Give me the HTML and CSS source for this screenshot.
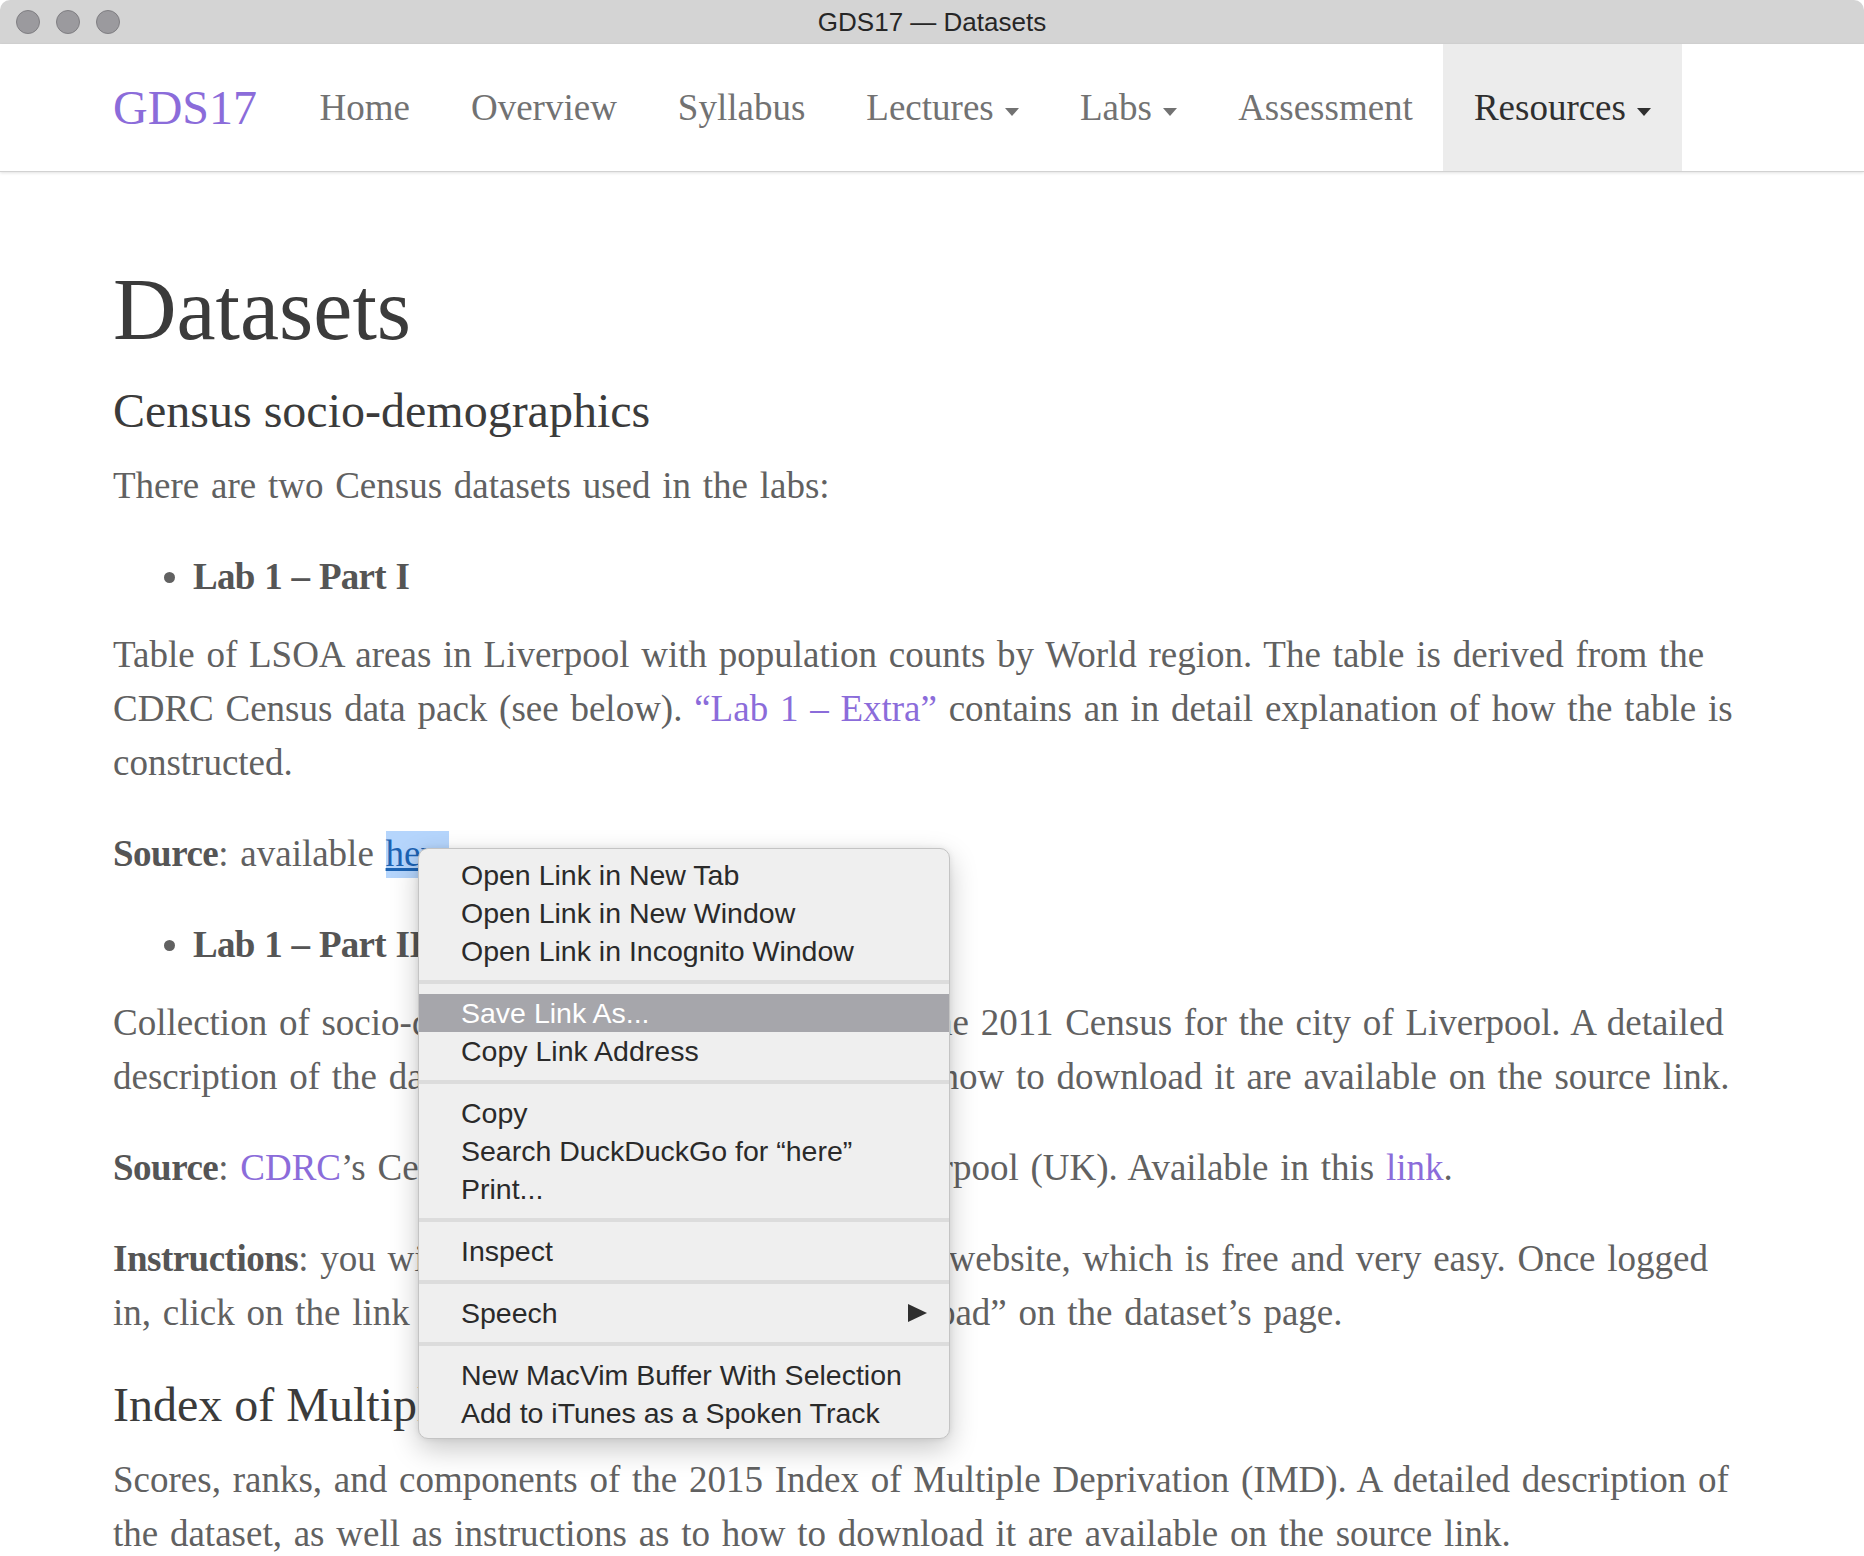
FILE: index.html
```html
<!DOCTYPE html>
<html lang="en">
<head>
<meta charset="utf-8">
<title>GDS17 — Datasets</title>
<link rel="stylesheet" href="styles.css">
</head>
<body>
<div class="window">
  <header class="titlebar">
    <div class="lights">
      <span class="light"></span><span class="light"></span><span class="light"></span>
    </div>
    <div class="title">GDS17 — Datasets</div>
    <div class="spacer"></div>
  </header>

  <nav class="navbar">
    <a class="brand" href="#">GDS17</a>
    <ul class="nav">
      <li><a href="#">Home</a></li>
      <li><a href="#">Overview</a></li>
      <li><a href="#">Syllabus</a></li>
      <li><a href="#">Lectures <span class="caret"></span></a></li>
      <li><a href="#">Labs <span class="caret"></span></a></li>
      <li><a href="#">Assessment</a></li>
      <li class="active"><a href="#">Resources <span class="caret"></span></a></li>
    </ul>
  </nav>

  <main class="content">
    <h1>Datasets</h1>
    <h2>Census socio-demographics</h2>
    <p>There are two Census datasets used in the labs:</p>
    <ul class="bullets">
      <li><strong>Lab 1 – Part I</strong></li>
    </ul>
    <p>Table of LSOA areas in Liverpool with population counts by World region. The table is derived from the CDRC Census data pack (see below). <a class="link" href="#">“Lab 1 – Extra”</a> contains an in detail explanation of how the table is constructed.</p>
    <p><strong>Source</strong>: available <a class="here" href="#">here</a></p>
    <ul class="bullets">
      <li><strong>Lab 1 – Part II</strong></li>
    </ul>
    <p>Collection of socio-demographic characteristics from the 2011 Census for the city of Liverpool. A detailed description of the dataset, as well as instructions as to how to download it are available on the source link.</p>
    <p><strong>Source</strong>: <a class="link" href="#">CDRC</a>’s Census data pack for the city of Liverpool (UK). Available in this <a class="link" href="#">link</a>.</p>
    <p><strong>Instructions</strong>: you will need to register with the CDRC website, which is free and very easy. Once logged in, click on the link presented under the name “Download” on the dataset’s page.</p>
    <h2>Index of Multiple Deprivation</h2>
    <p>Scores, ranks, and components of the 2015 Index of Multiple Deprivation (IMD). A detailed description of the dataset, as well as instructions as to how to download it are available on the source link.</p>
  </main>

  <div class="ctxmenu">
    <div class="item">Open Link in New Tab</div>
    <div class="item">Open Link in New Window</div>
    <div class="item">Open Link in Incognito Window</div>
    <div class="sep"></div>
    <div class="item selected">Save Link As...</div>
    <div class="item">Copy Link Address</div>
    <div class="sep"></div>
    <div class="item">Copy</div>
    <div class="item">Search DuckDuckGo for “here”</div>
    <div class="item">Print...</div>
    <div class="sep"></div>
    <div class="item">Inspect</div>
    <div class="sep"></div>
    <div class="item">Speech <span class="arrow"></span></div>
    <div class="sep"></div>
    <div class="item">New MacVim Buffer With Selection</div>
    <div class="item">Add to iTunes as a Spoken Track</div>
  </div>
</div>
</body>
</html>
```

FILE: styles.css
```css
html, body {
  margin: 0;
  padding: 0;
  background: #ffffff;
}

.window {
  position: relative;
  width: 1864px;
  height: 1556px;
  overflow: hidden;
  border-radius: 10px;
  background: #ffffff;
  font-family: "Liberation Serif", "Times New Roman", serif;
}

/* ---------- title bar ---------- */
.titlebar {
  height: 44px;
  background: #d4d4d4;
  display: grid;
  grid-template-columns: 1fr auto 1fr;
  align-items: center;
}

.lights {
  display: flex;
  gap: 16px;
  padding-left: 16px;
}

.light {
  width: 22px;
  height: 22px;
  border-radius: 50%;
  background: #9b9a9e;
  border: 1px solid #7f7e82;
}

.title {
  font-family: "Liberation Sans", Arial, sans-serif;
  font-size: 26px;
  color: #262626;
}

/* ---------- navbar ---------- */
.navbar {
  box-sizing: border-box;
  height: 128px;
  display: flex;
  align-items: stretch;
  padding-left: 113px;
  background: #ffffff;
  border-bottom: 1px solid #d2d2d2;
  box-shadow: 0 1px 3px rgba(0, 0, 0, 0.12);
}

.brand {
  font-size: 48px;
  line-height: 127px;
  color: #8b6cda;
  text-decoration: none;
  padding-right: 32px;
}

.nav {
  list-style: none;
  margin: 0;
  padding: 0;
  display: flex;
}

.nav li a {
  display: block;
  padding: 0 30.5px;
  font-size: 37px;
  line-height: 127px;
  color: #727272;
  text-decoration: none;
  white-space: nowrap;
}

.nav li.active a {
  background: #ececec;
  color: #2f2f2f;
}

.caret {
  display: inline-block;
  width: 0;
  height: 0;
  margin-left: 2px;
  vertical-align: middle;
  border-top: 8px solid currentColor;
  border-left: 7px solid transparent;
  border-right: 7px solid transparent;
}

/* ---------- content ---------- */
.content {
  padding: 100px 0 0 113px;
  width: 1640px;
  color: #616161;
}

h1 {
  margin: 0;
  font-size: 88px;
  line-height: 76px;
  font-weight: normal;
  color: #3b3b3b;
}

h2 {
  margin: 35px 0 20px;
  font-size: 48px;
  line-height: 56px;
  font-weight: normal;
  color: #3b3b3b;
}

p {
  margin: 0 0 37px;
  font-size: 37px;
  line-height: 54px;
  word-spacing: 2.5px;
}

strong {
  color: #555555;
  font-weight: bold;
  letter-spacing: -0.5px;
}

.bullets {
  margin: 0 0 24px;
  padding-left: 80px;
  font-size: 37px;
  line-height: 54px;
}

.bullets strong {
  letter-spacing: -0.7px;
  word-spacing: 1px;
}

.link {
  color: #8b6cda;
  text-decoration: none;
}

.here {
  color: #1c63b3;
  text-decoration: underline;
  background: #b5d5fc;
  padding: 2px 0 4px;
}

/* ---------- context menu ---------- */
.ctxmenu {
  position: absolute;
  left: 418px;
  top: 848px;
  box-sizing: border-box;
  width: 532px;
  height: 591px;
  padding: 7px 0;
  background: #efefef;
  border: 1px solid #c4c4c4;
  border-radius: 10px;
  box-shadow: 0 10px 28px rgba(0, 0, 0, 0.22), 0 0 6px rgba(0, 0, 0, 0.08);
  font-family: "Liberation Sans", Arial, sans-serif;
  font-size: 28.5px;
  color: #2a2a2a;
}

.item {
  height: 38px;
  line-height: 38px;
  padding: 0 22px 0 42px;
  display: flex;
  align-items: center;
  white-space: nowrap;
}

.item.selected {
  background: #a6a6ab;
  color: #ffffff;
}

.sep {
  height: 4px;
  margin: 10px 0;
  background: #dcdcdc;
}

.arrow {
  margin-left: auto;
  width: 0;
  height: 0;
  border-left: 19px solid #2f2f2f;
  border-top: 9.5px solid transparent;
  border-bottom: 9.5px solid transparent;
}
```
